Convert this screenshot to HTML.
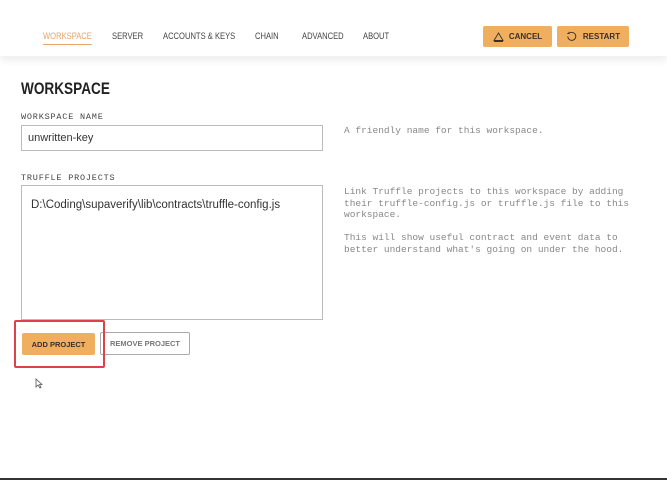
<!DOCTYPE html>
<html><head><style>
*{box-sizing:border-box;margin:0;padding:0}
body{width:667px;height:480px;background:#fff;font-family:"Liberation Sans",sans-serif;position:relative;overflow:hidden}
.hdr{position:absolute;left:0;top:0;width:667px;height:56px;background:#fff;box-shadow:0 4px 8px rgba(0,0,0,.08)}
.nav{position:absolute;top:31px;font-size:9.5px;color:#444;transform:scaleX(.8);transform-origin:left}
.btn{position:absolute;background:#f0ae5f;border-radius:2px;font-size:8px;font-weight:bold;color:#3a3028;display:flex;align-items:center;justify-content:center}
.lbl{position:absolute;left:21px;font-family:"Liberation Mono",monospace;font-size:8.5px;color:#444;letter-spacing:.8px}
.box{position:absolute;left:21px;width:302px;border:1px solid #bbb;background:#fff}
.help{position:absolute;left:344px;font-family:"Liberation Mono",monospace;font-size:9.5px;color:#888;line-height:11.5px}
</style></head><body>
<div class="hdr">
<div class="nav" style="left:43px;color:#e8a366">WORKSPACE<div style="border-bottom:1px solid #e8a366;margin-top:2px"></div></div>
<div class="nav" style="left:112px">SERVER</div>
<div class="nav" style="left:163px">ACCOUNTS &amp; KEYS</div>
<div class="nav" style="left:255px">CHAIN</div>
<div class="nav" style="left:302px">ADVANCED</div>
<div class="nav" style="left:363px">ABOUT</div>
<div class="btn" style="left:483px;top:26px;width:69px;height:21px"><svg width="11" height="10" viewBox="0 0 11 10" style="margin-right:5px"><path d="M5.5 1L10 8.5H1Z M1 9.5H10" fill="none" stroke="#3a3028" stroke-width="0.9"/></svg>CANCEL</div>
<div class="btn" style="left:557px;top:26px;width:72px;height:21px"><svg width="11" height="11" viewBox="0 0 11 11" style="margin-right:6px"><path d="M3 2.5A4 4 0 1 1 1.8 5.5M3 2.5V0.8M3 2.5H1.3" fill="none" stroke="#3a3028" stroke-width="0.9"/></svg>RESTART</div>
</div>
<div style="position:absolute;left:21px;top:79px;font-size:17px;font-weight:bold;color:#222;transform:scaleX(.8);transform-origin:left">WORKSPACE</div>
<div class="lbl" style="top:112px">WORKSPACE NAME</div>
<div class="box" style="top:125px;height:26px;padding:6px 6px;font-size:11px;color:#333">unwritten-key</div>
<div class="help" style="top:125px">A friendly name for this workspace.</div>
<div class="lbl" style="top:173px">TRUFFLE PROJECTS</div>
<div class="box" style="top:185px;height:135px;padding:13px 9px;font-size:11.5px;color:#333;white-space:nowrap">D:\Coding\supaverify\lib\contracts\truffle-config.js</div>
<div class="help" style="top:186px">Link Truffle projects to this workspace by adding<br>their truffle-config.js or truffle.js file to this<br>workspace.<br><br>This will show useful contract and event data to<br>better understand what's going on under the hood.</div>
<div class="btn" style="left:22px;top:333px;width:73px;height:22px;font-size:7.5px">ADD PROJECT</div>
<div style="position:absolute;left:100px;top:332px;width:90px;height:23px;border:1px solid #aaa;border-radius:2px;font-size:7.5px;font-weight:bold;color:#777;display:flex;align-items:center;justify-content:center">REMOVE PROJECT</div>
<div style="position:absolute;left:14px;top:320px;width:91px;height:48px;border:2px solid #e0404a;border-radius:2px"></div>
<svg style="position:absolute;left:35px;top:378px" width="8" height="11" viewBox="0 0 8 11"><path d="M1 1V9L3 7L5 10L6 9.5L4.5 6.5H7Z" fill="#fff" stroke="#555" stroke-width=".8"/></svg>
<div style="position:absolute;left:0;top:478px;width:667px;height:2px;background:#333"></div>
</body></html>
